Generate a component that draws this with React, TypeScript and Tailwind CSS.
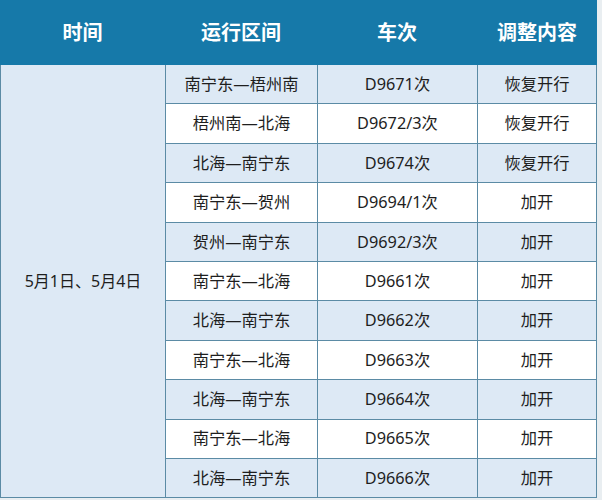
import React from "react";

const rows: [string, string, string][] = [
  ["南宁东—梧州南", "D9671次", "恢复开行"],
  ["梧州南—北海", "D9672/3次", "恢复开行"],
  ["北海—南宁东", "D9674次", "恢复开行"],
  ["南宁东—贺州", "D9694/1次", "加开"],
  ["贺州—南宁东", "D9692/3次", "加开"],
  ["南宁东—北海", "D9661次", "加开"],
  ["北海—南宁东", "D9662次", "加开"],
  ["南宁东—北海", "D9663次", "加开"],
  ["北海—南宁东", "D9664次", "加开"],
  ["南宁东—北海", "D9665次", "加开"],
  ["北海—南宁东", "D9666次", "加开"],
];

export default function App() {
  const font = { fontFamily: '"Noto Sans", "Noto Sans CJK SC", sans-serif' };
  return (
    <div className="w-[602px] h-[500px] bg-[#e9eef1] overflow-hidden" style={font}>
      <div className="w-[597px]">
        <div className="grid grid-cols-[165px_152px_160px_1fr] h-[65px] bg-[#1679a9] text-white font-bold text-[20px]">
          <div className="flex items-center justify-center">时间</div>
          <div className="flex items-center justify-center">运行区间</div>
          <div className="flex items-center justify-center">车次</div>
          <div className="flex items-center justify-center">调整内容</div>
        </div>
        <div className="grid grid-cols-[164px_151px_159px_1fr] grid-rows-[repeat(11,38.4px)] gap-px bg-[#5b8ba5] border-x border-b border-[#5b8ba5] text-[#1e1e1e] text-[16.3px]">
          <div className="row-span-11 bg-[#dde9f5] flex items-center justify-center text-[16px]">
            5月1日、5月4日
          </div>
          {rows.map((r, i) => {
            const bg = i % 2 === 0 ? "bg-[#dde9f5]" : "bg-white";
            return (
              <React.Fragment key={i}>
                <div className={`${bg} flex items-center justify-center`}>{r[0]}</div>
                <div className={`${bg} flex items-center justify-center`}>{r[1]}</div>
                <div className={`${bg} flex items-center justify-center`}>{r[2]}</div>
              </React.Fragment>
            );
          })}
        </div>
      </div>
    </div>
  );
}
